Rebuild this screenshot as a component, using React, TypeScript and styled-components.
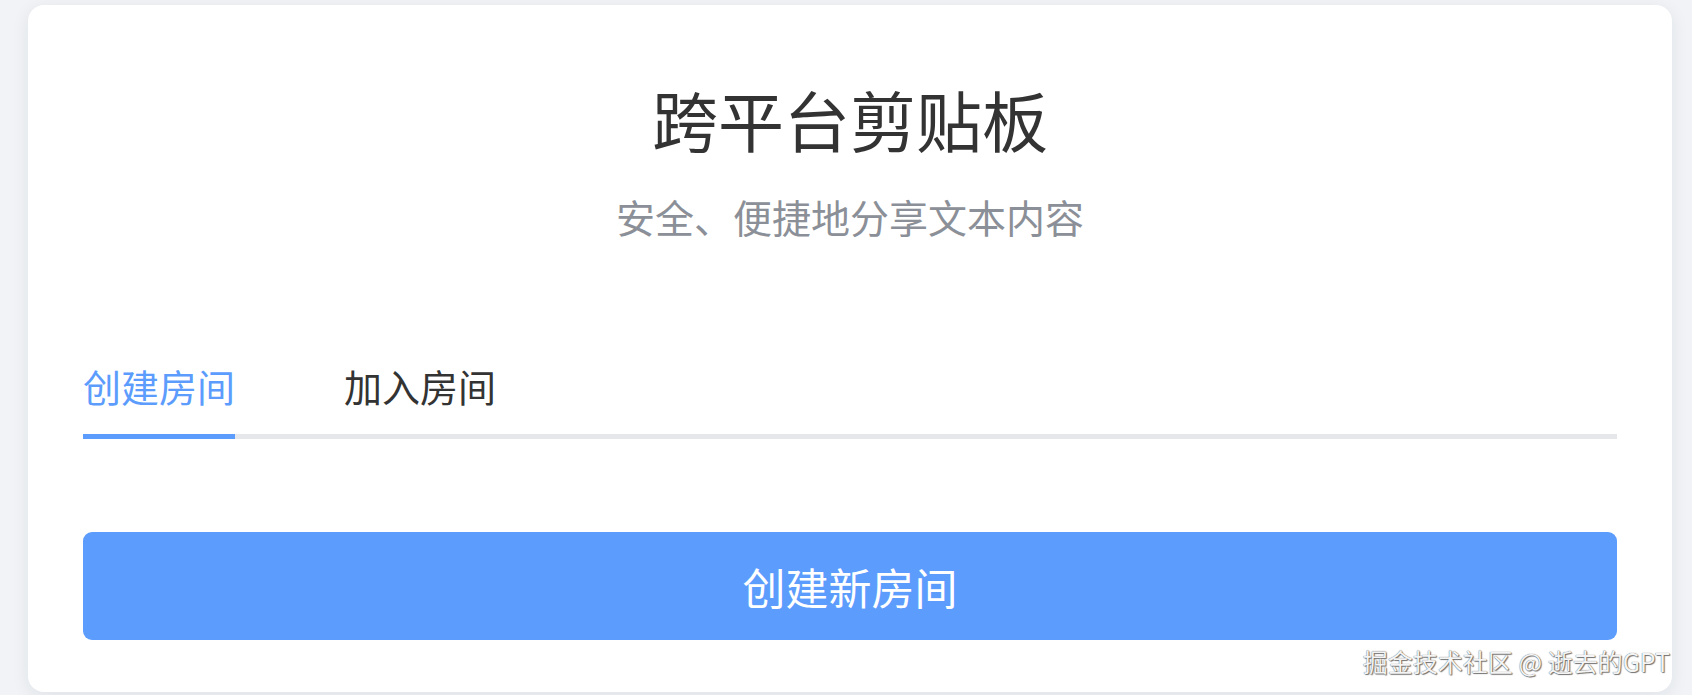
import React, { useState } from "react";
import styled, { createGlobalStyle } from "styled-components";

const GlobalStyle = createGlobalStyle`
  html, body {
    margin: 0;
    padding: 0;
    background: #f1f3f6;
    font-family: "Noto Sans CJK SC", "Noto Sans", sans-serif;
  }
  * {
    box-sizing: border-box;
  }
`;

const Page = styled.div`
  position: relative;
  height: 695px;
  padding: 5px 20px 0 28px;
  overflow: hidden;
`;

const Card = styled.div`
  background: #ffffff;
  border-radius: 16px;
  box-shadow: 0 4px 18px rgba(30, 40, 60, 0.08);
  padding: 80px 55px 52px;
  display: flex;
  flex-direction: column;
`;

const Title = styled.h1`
  margin: 0;
  font-size: 66px;
  line-height: 1;
  font-weight: 400;
  color: #333333;
  text-align: center;
`;

const Subtitle = styled.p`
  margin: 46px 0 0;
  font-size: 39px;
  line-height: 1;
  color: #8b8f97;
  text-align: center;
`;

const TabList = styled.div`
  margin-top: 131px;
  display: flex;
  gap: 109px;
  border-bottom: 5px solid #e5e7eb;
`;

const Tab = styled.button<{ $active: boolean }>`
  position: relative;
  border: none;
  background: none;
  padding: 0 0 29px;
  font-family: inherit;
  font-size: 38px;
  line-height: 1;
  color: ${(p) => (p.$active ? "#5c9cfd" : "#333333")};
  cursor: pointer;

  &::after {
    content: "";
    position: absolute;
    left: 0;
    right: 0;
    bottom: -5px;
    height: 5px;
    background: ${(p) => (p.$active ? "#5c9cfd" : "transparent")};
  }
`;

const PrimaryButton = styled.button`
  margin-top: 93px;
  height: 108px;
  border: none;
  border-radius: 9px;
  background: #5c9cfd;
  color: #ffffff;
  font-family: inherit;
  font-size: 43px;
  cursor: pointer;
`;

const Watermark = styled.div`
  position: absolute;
  right: 22px;
  bottom: 21px;
  font-size: 25px;
  line-height: 1;
  color: #f4f4f4;
  text-shadow: 0 0 1px #444, 1px 1px 1px #777;
  white-space: nowrap;
`;

const tabs = ["创建房间", "加入房间"];

export default function App() {
  const [active, setActive] = useState(0);
  return (
    <>
      <GlobalStyle />
      <Page>
        <Card>
          <Title>跨平台剪贴板</Title>
          <Subtitle>安全、便捷地分享文本内容</Subtitle>
          <TabList>
            {tabs.map((t, i) => (
              <Tab key={t} $active={i === active} onClick={() => setActive(i)}>
                {t}
              </Tab>
            ))}
          </TabList>
          <PrimaryButton>{active === 0 ? "创建新房间" : "加入房间"}</PrimaryButton>
        </Card>
        <Watermark>掘金技术社区 @ 逝去的GPT</Watermark>
      </Page>
    </>
  );
}
